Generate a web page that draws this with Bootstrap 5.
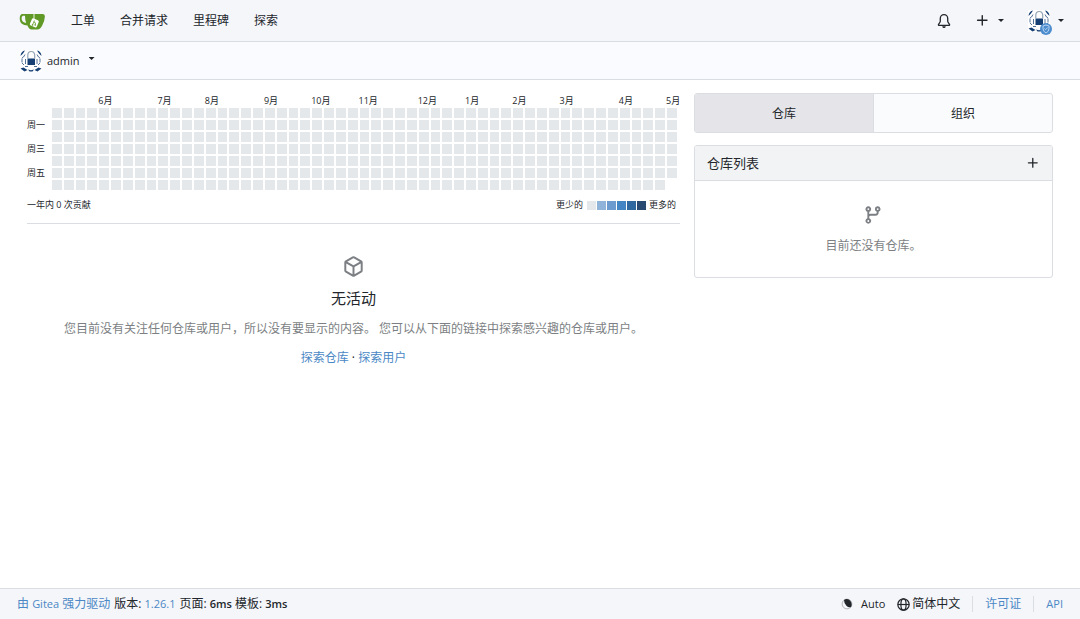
<!DOCTYPE html>
<html lang="zh-CN">
<head>
<meta charset="utf-8">
<meta name="viewport" content="width=device-width, initial-scale=1">
<title>admin - 控制面板 - Gitea</title>
<link href="https://cdn.jsdelivr.net/npm/bootstrap@5.3.0/dist/css/bootstrap.min.css" rel="stylesheet">
<style>
  :root { --line: #dadde1; --ink: #22262b; --muted-ink: #7c7f83; --accent: #4b88c5; --cell: #e4e8ea; }
  body { font: 12px/18px "Open Sans", "Noto Sans CJK SC", sans-serif; color: var(--ink); background: #fff; }
  a { color: var(--accent); text-decoration: none; }
  .latin { font-size: 11px; }
  svg { display: block; flex: none; }
  .topbar { background: #f5f6fa; border-bottom: 1px solid var(--line); padding: 0 16px 0 19px; min-height: 42px; }
  .topbar .nav-link { color: var(--ink); padding: 1px 12px 0 13px; }
  .topbar .brand { margin-right: 12px; padding-top: 2px; }
  .plain-btn { border: 0; background: none; padding: 0; color: inherit; display: flex; align-items: center; font-size: inherit; line-height: inherit; }
  .subbar { background: #fafbfe; border-bottom: 1px solid var(--line); padding: 0 20px; min-height: 38px; }
  .subbar .latin { margin: 0 9px 0 5px; }
  .caret { width: 6px; height: 3px; background: currentColor; clip-path: polygon(0 0, 100% 0, 50% 100%); }
  .avatar-wrap .badge-mark { right: -2px; bottom: -3px; }
  .dash { padding: 13px 27px; gap: 14px; }
  .side { flex: 0 0 35%; min-width: 0; }
  .feed { min-width: 0; }
  .heatmap { display: grid; grid-auto-flow: column; grid-template-rows: 13px repeat(7, auto); grid-template-columns: 23px repeat(53, minmax(0, 1fr)); gap: 2px; font-size: 9px; line-height: 12px; padding-right: 3px; }
  .heatmap span { white-space: nowrap; min-width: 0; height: 10px; line-height: 10px; }
  .heatmap .month { height: 13px; line-height: 16px; margin-left: -1px; }
  .heatmap .day { aspect-ratio: 1; height: auto; background: var(--cell); }
  .heat-foot { font-size: 9px; line-height: 12px; padding: 9px 4px 12px 0; }
  .scale { gap: 1px; margin: 0 3px 0 4px; }
  .scale i { width: 9px; height: 9px; }
  .rule { border-top: 1px solid var(--line); }
  .hush { color: var(--muted-ink); }
  .empty-feed { padding-top: 32px; }
  .empty-feed h2 { font-size: 15px; line-height: 20px; font-weight: 400; margin: 11px 0 12px; }
  .empty-feed p { margin-bottom: 11px; }
  .tabs { border: 1px solid var(--line); border-radius: 3px; background: #fafbfd; overflow: hidden; }
  .tabs a { flex: 1; color: var(--ink); line-height: 38px; padding-top: 1px; height: 38px; text-align: center; }
  .tabs a + a { border-left: 1px solid var(--line); }
  .tabs a.active { background: #e5e4e8; }
  .repo-box { border: 1px solid var(--line); border-radius: 3px; margin-top: 12px; overflow: hidden; }
  .repo-head { background: #f2f3f5; border-bottom: 1px solid var(--line); min-height: 35px; padding: 0 12px; font-size: 13px; }
  .repo-empty { padding: 24px 0 22px; }
  .repo-empty p { margin: 12px 0 0; }
  .foot { background: #f5f6fa; border-top: 1px solid var(--line); padding: 0 17px; min-height: 31px; line-height: 16px; }
  .foot a.divided { border-left: 1px solid var(--line); padding-left: 12px; margin-left: 12px; }
  .foot strong { font-weight: 600; }
</style>
</head>
<body class="d-flex flex-column min-vh-100">
<svg width="0" height="0" class="position-absolute" aria-hidden="true">
  <symbol id="avatar" viewBox="0 0 22 22">
    <rect width="22" height="22" fill="#fff"/>
    <path fill="#163f73" d="M7.500 8.500h7.500v6.500h-7.500zM.5 6Q1 1 5 .5L3 3.500zM21.500 6Q21 1 17 .5L19 3.500zM.5 18.500l3-1 4 2.500-3 1.500zM21.500 18.500l-3-1-4 2.500 3 1.500zM8 19.500l3 .8 3-.8-1.500 2h-3z"/>
    <path d="M7.800 8.500V5Q8 1.500 11.200 1.500T14.700 5v3.500" fill="none" stroke="#94a3b5" stroke-width="1.200"/>
    <path d="M5 4.500L3.500 7 2 8M2 8.500v4M2 13l2 2M17 4.500L18.500 7 20 8M20 8.500v4M20 13l-2 2M5.500 9v5M17 9v5M5 16.500h3M14 16.500h3" fill="none" stroke="#557397"/>
  </symbol>
  <symbol id="plus" viewBox="0 0 16 16"><path fill="currentColor" d="M7.750 2a.75.75 0 0 1 .75.75V7h4.250a.75.75 0 0 1 0 1.500H8.500v4.250a.75.75 0 0 1-1.500 0V8.500H2.750a.75.75 0 0 1 0-1.500H7V2.750A.75.75 0 0 1 7.750 2"/></symbol>
</svg>

<nav class="topbar d-flex align-items-center" aria-label="主导航">
  <a class="brand" href="#" aria-label="Gitea">
    <svg width="27" height="18" viewBox="0 0 27 18">
      <path fill="#609926" fill-rule="evenodd" d="M3.500 1h20.500q2 0 1.900 2.500-.2 4.500-2.700 9-2 4-4.700 4h-6q-2.500 0-4-4Q1 12 .7 6 .7 1 3.500 1m.5 1.800Q2.300 3.300 2.600 6q.5 3.300 4.600 4Q6 7 6 2.800z"/>
      <rect x="11.500" y="6" width="7.500" height="7.500" rx="1.500" fill="#fff" transform="rotate(24 15 10)"/>
      <path d="M15 1v5.500" stroke="#fff" stroke-width=".9" fill="none"/>
      <path d="M15.500 7.500l-2 4.500M14.800 9q2.500.3 1.500 2.800" stroke="#609926" stroke-width=".8" fill="none"/>
      <circle cx="13.500" cy="12" r=".8" fill="#609926"/><circle cx="16.200" cy="12" r=".8" fill="#609926"/>
    </svg>
  </a>
  <a class="nav-link" href="#">工单</a>
  <a class="nav-link" href="#">合并请求</a>
  <a class="nav-link" href="#">里程碑</a>
  <a class="nav-link" href="#">探索</a>
  <div class="ms-auto d-flex align-items-center">
    <a href="#" class="text-reset" aria-label="通知">
      <svg width="14" height="14" viewBox="0 0 16 16"><path fill="currentColor" d="M8 16a2 2 0 0 0 1.985-1.750c.017-.137-.097-.25-.235-.25h-3.500c-.138 0-.252.113-.235.250A2 2 0 0 0 8 16M3 5a5 5 0 0 1 10 0v2.947q0 .75.139.943l1.703 2.555A1.519 1.519 0 0 1 13.518 13.800H2.482A1.516 1.516 0 0 1 1.180 11.445L2.900 8.860Q3 8.700 3 7.947Zm5-3.500A3.500 3.500 0 0 0 4.500 5v2.947q0 1.053-.5 1.745l-1.500 2.300q0 .3.200.308h10.600q.2 0 .2-.3L12 9.700q-.5-.7-.5-1.753V5A3.500 3.500 0 0 0 8 1.500"/></svg>
    </a>
    <button class="plain-btn ms-4" type="button" aria-label="新建">
      <svg width="15" height="15"><use href="#plus"/></svg><span class="caret ms-2 me-4"></span>
    </button>
    <button class="plain-btn" type="button" aria-label="用户菜单">
      <span class="avatar-wrap position-relative"><svg width="22" height="22"><use href="#avatar"/></svg>
        <svg class="badge-mark position-absolute" width="12" height="12" viewBox="0 0 12 12"><circle cx="6" cy="6" r="6" fill="#4d8dce"/><path d="M6 2l3 1v2.500Q9 8.500 6 10 3 8.500 3 5.500V3zM4.500 5.500l1.200 1.200 2-2.200" fill="none" stroke="#cfe3f8" stroke-width=".8"/></svg>
      </span><span class="caret ms-2"></span>
    </button>
  </div>
</nav>

<div class="subbar d-flex align-items-center">
  <button class="plain-btn" type="button">
    <svg width="22" height="22"><use href="#avatar"/></svg>
    <span class="latin">admin</span><span class="caret mb-1"></span>
  </button>
</div>

<main class="dash d-flex align-items-start flex-grow-1">
  <section class="feed flex-grow-1">
    <div class="heatmap" id="heatmap"></div>
    <div class="heat-foot d-flex align-items-center">
      <span>一年内 0 次贡献</span>
      <span class="ms-auto">更少的</span>
      <span class="scale d-flex" id="scale"></span>
      <span>更多的</span>
    </div>
    <div class="rule"></div>
    <div class="empty-feed text-center">
      <svg class="mx-auto hush" width="21" height="21" viewBox="0 0 16 16"><path fill="currentColor" d="m8.878.392 5.250 3.045c.54.314.872.890.872 1.514v6.098a1.750 1.750 0 0 1-.872 1.514l-5.250 3.045a1.750 1.750 0 0 1-1.756 0l-5.250-3.045A1.750 1.750 0 0 1 1 11.049V4.951c0-.624.332-1.201.872-1.514L7.122.392a1.750 1.750 0 0 1 1.756 0M7.875 1.690l-4.630 2.685L8 7.133l4.755-2.758-4.630-2.685a.250.250 0 0 0-.250 0M2.500 5.677v5.372c0 .09.047.171.125.216l4.625 2.683V8.432Zm6.250 8.271 4.625-2.683a.250.250 0 0 0 .125-.216V5.677L8.750 8.432Z"/></svg>
      <h2>无活动</h2>
      <p class="hush">您目前没有关注任何仓库或用户，所以没有要显示的内容。 您可以从下面的链接中探索感兴趣的仓库或用户。</p>
      <div><a href="#">探索仓库</a> · <a href="#">探索用户</a></div>
    </div>
  </section>
  <aside class="side">
    <nav class="tabs d-flex" aria-label="列表切换"><a class="active" href="#">仓库</a><a href="#">组织</a></nav>
    <section class="repo-box">
      <div class="repo-head d-flex align-items-center justify-content-between">
        <span>仓库列表</span>
        <a href="#" class="text-reset" aria-label="新建仓库"><svg width="14" height="14"><use href="#plus"/></svg></a>
      </div>
      <div class="repo-empty text-center hush">
        <svg class="mx-auto" width="20" height="20" viewBox="0 0 16 16"><path fill="currentColor" d="M9.500 3.250a2.250 2.250 0 1 1 3 2.122V6A2.500 2.500 0 0 1 10 8.500H6a1 1 0 0 0-1 1v1.128a2.251 2.251 0 1 1-1.500 0V5.372a2.250 2.250 0 1 1 1.500 0v1.836A2.500 2.500 0 0 1 6 7h4a1 1 0 0 0 1-1v-.628A2.250 2.250 0 0 1 9.500 3.250m-6 0a.75.75 0 1 0 1.500 0 .75.75 0 0 0-1.500 0m8.250-.75a.75.75 0 1 0 0 1.500.75.75 0 0 0 0-1.500M4.250 12a.75.75 0 1 0 0 1.500.75.75 0 0 0 0-1.500"/></svg>
        <p>目前还没有仓库。</p>
      </div>
    </section>
  </aside>
</main>

<footer class="foot d-flex align-items-center">
  <a href="#">由 <span class="latin">Gitea</span> 强力驱动</a>
  <span class="ms-1">版本: <a class="latin" href="#">1.26.1</a></span>
  <span class="ms-1">页面: <strong class="latin">6ms</strong> 模板: <strong class="latin">3ms</strong></span>
  <div class="ms-auto d-flex align-items-center">
    <button class="plain-btn" type="button">
      <svg width="12" height="12" viewBox="0 0 16 16"><circle cx="8" cy="8" r="6.500" fill="none" stroke="#999da2" stroke-width="1"/><path fill="currentColor" d="M4 2.500Q8 0 12 3.200q3.500 4 1.500 8.800Q10 13.500 7 10T4 2.500"/></svg>
      <span class="latin ms-2">Auto</span>
    </button>
    <button class="plain-btn ms-2" type="button">
      <svg class="ms-1" width="13" height="13" viewBox="0 0 16 16"><g fill="none" stroke="currentColor" stroke-width="1.500"><circle cx="8" cy="8" r="7"/><ellipse cx="8" cy="8" rx="3.200" ry="7"/><path d="M1 8h14"/></g></svg>
      <span>&thinsp;简体中文</span>
    </button>
    <a class="divided" href="#">许可证</a>
    <a class="divided latin" href="#">API</a>
  </div>
</footer>

<script src="https://cdn.jsdelivr.net/npm/bootstrap@5.3.0/dist/js/bootstrap.bundle.min.js"></script>
<script>
  const map = document.getElementById('heatmap');
  const add = (text, cls) => {
    const el = document.createElement('span');
    el.textContent = text;
    if (cls) el.className = cls;
    map.append(el);
  };
  ['', '', '周一', '', '周三', '', '周五', ''].forEach(t => add(t));
  const months = {4: '6月', 9: '7月', 13: '8月', 18: '9月', 22: '10月', 26: '11月', 31: '12月', 35: '1月', 39: '2月', 43: '3月', 48: '4月', 52: '5月'};
  for (let week = 0; week < 53; week++) {
    add(months[week] || '', 'month');
    for (let day = 0; day < 7; day++) if (week < 52 || day < 6) add('', 'day');
  }
  for (const color of ['#e4e8ea', '#8fb3d9', '#6c9bd0', '#4385c2', '#2f689f', '#294a70']) {
    const chip = document.createElement('i');
    chip.style.background = color;
    document.getElementById('scale').append(chip);
  }
</script>
</body>
</html>
